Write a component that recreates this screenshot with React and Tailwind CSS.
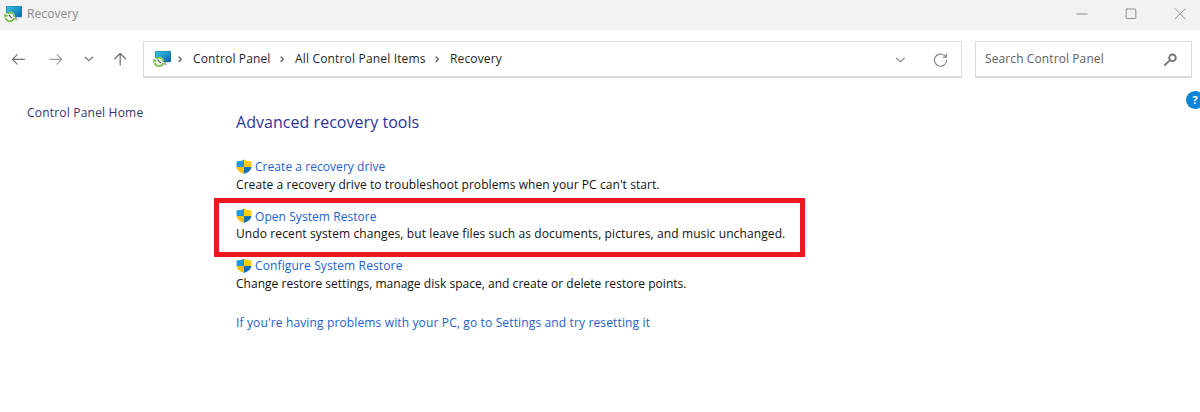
import React from "react";

function RecoveryIcon() {
  return (
    <svg width="19" height="18" viewBox="0 0 19 18" fill="none" className="shrink-0">
      <defs>
        <linearGradient id="screen" x1="0" y1="0" x2="1" y2="1">
          <stop offset="0" stopColor="#37c3e0" />
          <stop offset="1" stopColor="#0a66ae" />
        </linearGradient>
      </defs>
      <path d="M11 12.5h2v2.3h-2z" fill="#9aa3aa" />
      <path d="M9 14.4h5.4v.9H9z" fill="#b3b9bd" />
      <rect x="2" y="1" width="16" height="11.2" rx="0.9" fill="#1878ac" />
      <rect x="2.7" y="1.6" width="14.6" height="9.9" rx="0.4" fill="url(#screen)" />
      <circle cx="6" cy="11.7" r="5" fill="#f4f7f3" />
      <path d="M3.2 8.5A4.6 4.6 0 0 1 10.5 12.1M10.3 13A4.6 4.6 0 0 1 1.6 13.2" stroke="#6fbf3b" strokeWidth="1.6" />
      <path d="M.2 8.7l.2 4.1 4-2z" fill="#6fbf3b" />
      <path d="M4.8 9.6l1.7 2.3 1.5 1.3" stroke="#555" strokeWidth="1.1" />
    </svg>
  );
}

function Shield() {
  return (
    <svg width="16" height="16" viewBox="0 0 16 16" className="shrink-0">
      <path d="M8 .4C5.8 1.9 3.5 2.2.6 2.2V8H8z" fill="#2099dc" />
      <path d="M8 .4c2.2 1.5 4.5 1.8 7.4 1.8V8H8z" fill="#fccb0a" />
      <path d="M.6 8c.3 3.4 3.2 5.6 7.4 6.9V8z" fill="#f5bd0c" />
      <path d="M15.4 8c-.3 3.4-3.2 5.6-7.4 6.9V8z" fill="#1671b4" />
    </svg>
  );
}

function Line({ d, className, size = 16, width = 1.2 }) {
  return (
    <svg
      width={size}
      height={size}
      viewBox="0 0 16 16"
      fill="none"
      stroke="currentColor"
      strokeWidth={width}
      strokeLinecap="round"
      strokeLinejoin="round"
      className={className}
    >
      <path d={d} />
    </svg>
  );
}

function Crumb({ gap, className, children }) {
  return (
    <>
      <Line d="M7.1 6l2.2 2.2-2.2 2.2" width={1.4} className={`shrink-0 text-[#606060] ${gap}`} />
      <span className={`pt-px ${className}`}>{children}</span>
    </>
  );
}

function Tool({ title, titleClass, detail, detailClass, highlighted }) {
  return (
    <li className="relative h-[49.6px]">
      <a className="flex h-[17.5px] items-center gap-[3px] text-[#2262cf]">
        <Shield />
        <span className={titleClass}>{title}</span>
      </a>
      <p className={`h-[17.5px] leading-[17.5px] text-[#111] ${detailClass}`}>{detail}</p>
      {highlighted && (
        <div className="absolute -left-[22px] -top-[10px] h-[59px] w-[591px] border-[5.5px] border-[#ed1820]" />
      )}
    </li>
  );
}

export default function App() {
  return (
    <div className="h-[412px] w-[1200px] overflow-hidden whitespace-nowrap bg-white font-['Open_Sans','Noto_Sans',sans-serif] text-[12px] leading-4">
      <header className="flex h-[30px] items-center justify-between bg-[#f2f2f2] pb-[3px] pl-[4px] pr-[12px]">
        <div className="flex items-center gap-1 text-[#8c8c8c]">
          <RecoveryIcon />
          <h1 className="pt-px tracking-[0.08px]">Recovery</h1>
        </div>
        <div className="flex items-center gap-[33px] text-[#8f8f8f]">
          <Line d="M2.8 8h10.4" width={1} />
          <Line d="M4 3h8q.8 0 .8.8v7.9q0 .8-.8.8H4q-.8 0-.8-.8V3.8q0-.8.8-.8z" width={1} />
          <Line d="M3.2 2.8l10 10M13.2 2.8l-10 10" width={1} />
        </div>
      </header>

      <nav className="flex h-[58px] items-center pl-[10px] pr-2">
        <div className="flex items-center text-[#707070]">
          <Line d="M14.4 8.4H2.4M7.2 3.6L2.4 8.4l4.8 4.8" />
          <Line d="M1.8 8.4h12M9 3.6l4.8 4.8-4.8 4.8" className="ml-[22px] text-[#a0a0a0]" />
          <Line d="M4.2 6.2l3.7 3.4 3.7-3.4" className="ml-[17px]" />
          <Line d="M8.2 14V2.5M2.8 7.8l5.4-5.3 5.4 5.3" className="ml-[15px]" />
        </div>
        <div className="ml-[15px] flex h-[37px] w-[819px] items-center border border-b-2 border-[#dcdcdc] pl-[9px] pr-[12px] text-[#1f1f1f]">
          <RecoveryIcon />
          <Crumb gap="ml-0 mr-[5px]" className="w-[78px] tracking-[0.14px]">Control Panel</Crumb>
          <Crumb gap="ml-[3px] mr-[5px]" className="w-[131px] tracking-[0.17px]">All Control Panel Items</Crumb>
          <Crumb gap="ml-[3px] mr-[5px]" className="tracking-[0.14px]">Recovery</Crumb>
          <div className="ml-auto flex items-center text-[#808080]">
            <Line d="M3.4 7.2l4 3.6 4-3.6" width={1.1} />
            <Line d="M13.6 9.2a6.1 6.1 0 1 1-2-4.6l1.4 1.4M13.3 3v3.2h-3.2" className="ml-6" width={1.1} />
          </div>
        </div>
        <div className="ml-[13px] flex h-[37px] w-[217px] items-center justify-between border border-b-2 border-[#dcdcdc] pl-[9px] pr-[13px] text-[#606060]">
          <span className="pt-px tracking-[0.1px]">Search Control Panel</span>
          <Line d="M10.5 3.5a3.3 3.3 0 1 1-.01 0M8 9.2l-5.2 4.9" width={1.8} className="text-[#707070]" />
        </div>
      </nav>

      <div className="flex h-[324px]">
        <aside className="w-[236px] pl-[27px] pt-[17px] tracking-[0.2px] text-[#33366f]">Control Panel Home</aside>
        <main className="flex-1 pt-[22px]">
          <h2 className="text-[16px] leading-6 tracking-[0.04px] text-[#2c35a0]">Advanced recovery tools</h2>
          <ul className="pt-[24px]">
            <Tool
              title="Create a recovery drive"
              titleClass="tracking-[0.05px]"
              detail="Create a recovery drive to troubleshoot problems when your PC can't start."
              detailClass="tracking-[0.07px]"
            />
            <Tool
              title="Open System Restore"
              titleClass="pt-px tracking-[0.06px]"
              detail="Undo recent system changes, but leave files such as documents, pictures, and music unchanged."
              detailClass="tracking-[0.11px]"
              highlighted
            />
            <Tool
              title="Configure System Restore"
              titleClass="tracking-[0.13px]"
              detail="Change restore settings, manage disk space, and create or delete restore points."
              detailClass="tracking-[0.025px]"
            />
          </ul>
          <a className="block pt-[8px] tracking-[0.14px] text-[#2262cf]">
            If you're having problems with your PC, go to Settings and try resetting it
          </a>
        </main>
        <div className="w-[14px] shrink-0 overflow-hidden pt-[3px]">
          <div className="flex h-[18px] w-[18px] items-center justify-center rounded-full bg-[#0c84d8] text-[11px] font-bold text-white">
            ?
          </div>
        </div>
      </div>
    </div>
  );
}
